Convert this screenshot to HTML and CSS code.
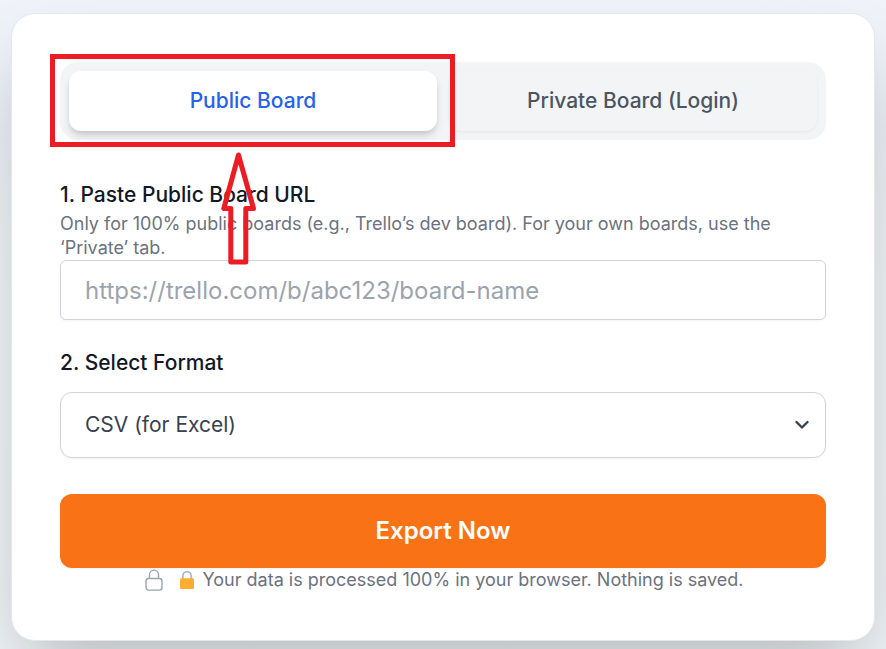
FILE: index.html
```html
<!DOCTYPE html>
<html lang="en">
<head>
  <meta charset="UTF-8">
  <title>Trello Board Export</title>
  <link rel="stylesheet" href="styles.css">
</head>
<body>
  <main class="card">
    <div class="tabs">
      <button class="tab active" type="button">Public Board</button>
      <button class="tab" type="button">Private Board (Login)</button>
    </div>

    <div class="field">
      <label class="label" for="board-url">1. Paste Public Board URL</label>
      <p class="hint">Only for 100% public boards (e.g., Trello’s dev board). For your own boards, use the ‘Private’ tab.</p>
      <input class="url-input" id="board-url" type="text" placeholder="https://trello.com/b/abc123/board-name">
    </div>

    <div class="format-field">
      <div class="label">2. Select Format</div>
      <button class="select" type="button">
        <span>CSV (for Excel)</span>
        <svg class="chevron" viewBox="0 0 14 10" fill="none" stroke="currentColor" stroke-width="2.4" stroke-linecap="round" stroke-linejoin="round">
          <path d="M1.5 2 7 7.5 12.5 2"/>
        </svg>
      </button>
    </div>

    <button class="export" type="button">Export Now</button>

    <div class="privacy">
      <svg class="lock-outline" viewBox="0 0 18 22" fill="none" stroke="currentColor" stroke-width="1.4">
        <path d="M4.5 9.5V5.6a4.5 4.5 0 0 1 9 0v3.9"/>
        <rect x="1" y="9.5" width="16" height="11.6" rx="2.5"/>
      </svg>
      <svg class="lock-solid" viewBox="0 0 14 18">
        <path d="M2.9 9V4.8a4.1 4.1 0 0 1 8.2 0V9" fill="none" stroke="#aab8c2" stroke-width="1.7"/>
        <rect y="7.2" width="14" height="10.8" rx="1.3" fill="#ffac33"/>
      </svg>
      <span>Your data is processed 100% in your browser. Nothing is saved.</span>
    </div>
  </main>

  <!-- callout for the active tab -->
  <div class="highlight"></div>
  <svg class="arrow" viewBox="0 0 36 116" fill="none" stroke="#ed1c24" stroke-width="5" stroke-linejoin="round">
    <path d="M17.5 4 2.8 57.5H9.8V111H24.8V57.5H32.5Z"/>
  </svg>
</body>
</html>
```
FILE: styles.css
```css
* {
  box-sizing: border-box;
}

body {
  margin: 0;
  height: 649px;
  padding: 13px 11px 8px;
  overflow: hidden;
  background: linear-gradient(#f0f3fa, #eaeef5 20%, #edf3f5 45%, #edf2f6);
  font-family: Inter, "Liberation Sans", sans-serif;
}

button,
input {
  margin: 0;
  font-family: inherit;
}

.card {
  height: 628px;
  padding: 48px;
  border: 1px solid #e5e7eb;
  border-radius: 24px;
  background: #fff;
  box-shadow: 0 37px 75px -18px rgba(0, 0, 0, 0.25);
}

.tabs {
  display: flex;
  gap: 12px;
  height: 78px;
  padding: 9px;
  border-radius: 18px;
  background: #f3f4f6;
}

.tab {
  flex: 1;
  height: 60px;
  padding: 0 0 2px;
  border: 0;
  border-radius: 12px;
  background: #f3f4f6;
  color: #4b5563;
  font-size: 21px;
  font-weight: 500;
  box-shadow: 0 1px 3px rgba(0, 0, 0, 0.06);
}

.tab.active {
  background: #fff;
  color: #2563eb;
  box-shadow: 0 6px 9px -1px rgba(0, 0, 0, 0.12), 0 3px 6px -2px rgba(0, 0, 0, 0.12);
}

.field {
  margin-top: 40px;
}

.label {
  display: block;
  color: #111827;
  font-size: 21px;
  font-weight: 500;
  line-height: 30px;
}

.hint {
  margin: 2px 0 0;
  color: #6b7280;
  font-size: 18px;
  line-height: 24px;
}

.url-input {
  display: block;
  width: 100%;
  height: 60px;
  padding: 0 24px;
  border: 1px solid #d1d5db;
  border-radius: 6px;
  background: #fff;
  font-size: 24px;
  box-shadow: 0 1px 3px rgba(0, 0, 0, 0.05);
}

.url-input::placeholder {
  color: #9ca3af;
}

.format-field {
  margin-top: 28px;
}

.select {
  display: flex;
  align-items: center;
  justify-content: space-between;
  width: 100%;
  height: 66px;
  margin-top: 14px;
  padding: 0 16px 1px 24px;
  border: 1px solid #d1d5db;
  border-radius: 12px;
  background: #fff;
  color: #374151;
  font-size: 21px;
  box-shadow: 0 1px 3px rgba(0, 0, 0, 0.05);
}

.chevron {
  width: 14px;
  height: 10px;
}

.export {
  display: block;
  width: 100%;
  height: 74px;
  margin-top: 36px;
  padding: 0 0 2px;
  border: 0;
  border-radius: 12px;
  background: #f97316;
  color: #fff;
  font-size: 24px;
  font-weight: 600;
  box-shadow: 0 1px 3px rgba(0, 0, 0, 0.05);
}

.privacy {
  display: flex;
  align-items: center;
  justify-content: center;
  height: 24px;
  padding-left: 3px;
  color: #6b7280;
  font-size: 18px;
  line-height: 24px;
}

.lock-outline {
  width: 18px;
  height: 22px;
  margin-right: 17px;
  color: #9ca3af;
}

.lock-solid {
  width: 14px;
  height: 18px;
  margin-right: 8px;
}

.highlight {
  position: absolute;
  top: 54px;
  left: 50px;
  width: 405px;
  height: 93px;
  border: 5px solid #ed1c24;
}

.arrow {
  position: absolute;
  top: 151px;
  left: 221px;
  width: 36px;
  height: 116px;
}
```
